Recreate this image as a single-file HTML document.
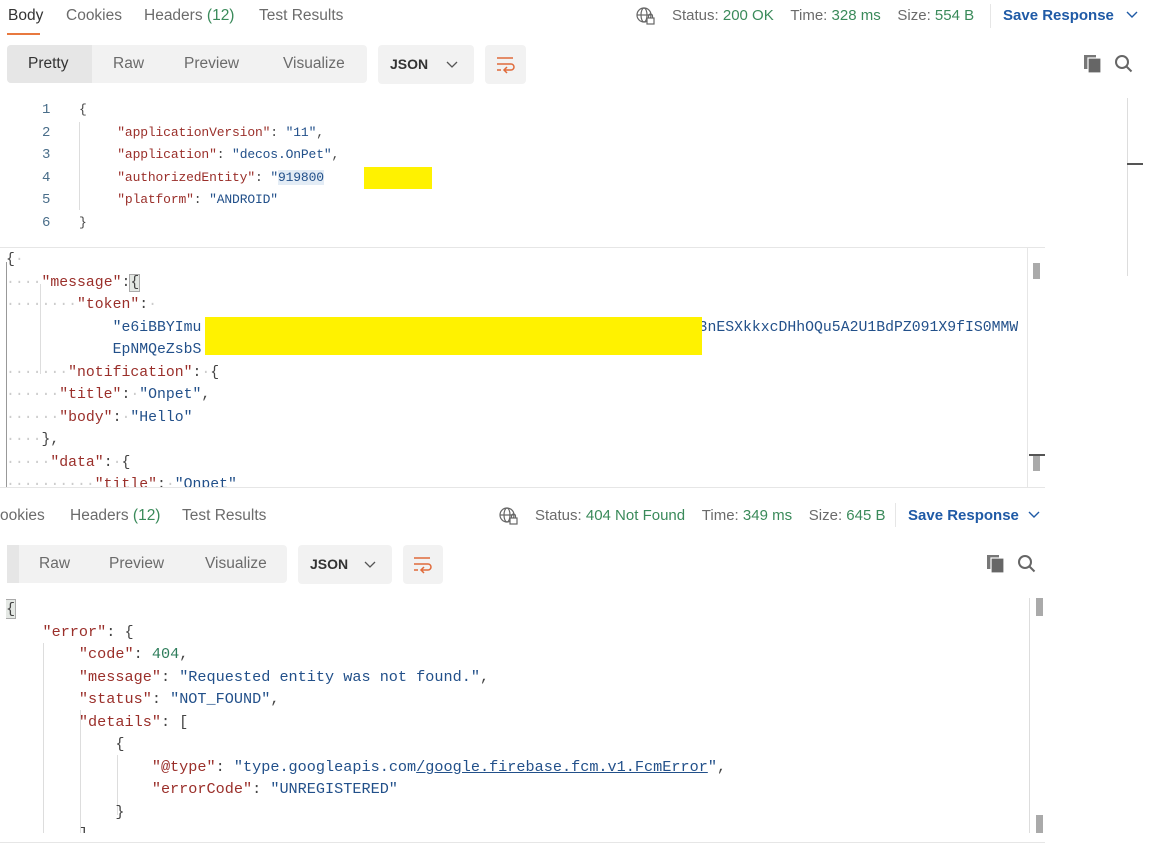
<!DOCTYPE html>
<html><head><meta charset="utf-8"><style>
body{margin:0;width:1156px;height:844px;background:#fff;position:relative;overflow:hidden;font-family:"Liberation Sans",sans-serif;}
.a{position:absolute;white-space:pre;}
.b{position:absolute;}
.b div{white-space:pre;}
.t{font-size:15.5px;color:#6b6b6b;}
.g{color:#3a8a5a;}
.sv{font-size:15px;color:#1f5aa6;font-weight:bold;}
.seg{position:absolute;background:#f2f2f2;border-radius:4px;}
.m{font-family:"Liberation Mono",monospace;font-size:14.8px;line-height:22.5px;}
.m3{font-family:"Liberation Mono",monospace;font-size:15.2px;line-height:22.5px;}
.m2{font-family:"Liberation Mono",monospace;font-size:13px;letter-spacing:-0.15px;line-height:22.5px;}
.k{color:#9a2f2a}.s{color:#22508a}.n{color:#2e7d5b}.p{color:#444}.d{color:#ccc}
.ln{color:#4a6e8a;font-size:14px;font-family:"Liberation Mono",monospace;line-height:22.5px;}
.st{font-size:15px;color:#6b6b6b;}
</style></head><body>
<!-- top tabs -->
<div class="a t" style="left:8px;top:7px;color:#333">Body</div>
<div style="position:absolute;left:7px;top:33px;width:33px;height:2px;background:#e8793f"></div>
<div class="a t" style="left:66px;top:7px">Cookies</div>
<div class="a t" style="left:144px;top:7px">Headers <span class="g">(12)</span></div>
<div class="a t" style="left:259px;top:7px">Test Results</div>
<svg class="a" style="left:636px;top:6px" width="20" height="20" viewBox="0 0 20 20" fill="none" stroke="#666" stroke-width="1.2"><circle cx="8" cy="9" r="7"/><ellipse cx="8" cy="9" rx="3" ry="7"/><path d="M1 9h14"/><rect x="11" y="12" width="7" height="6" fill="#fff"/><path d="M12.5 12v-2a2 2 0 0 1 4 0v2"/></svg>
<div class="a st" style="left:672px;top:7px">Status: <span class="g">200 OK</span>&nbsp;&nbsp;&nbsp;&nbsp;Time: <span class="g">328 ms</span>&nbsp;&nbsp;&nbsp;&nbsp;Size: <span class="g">554 B</span></div>
<div style="position:absolute;left:990px;top:4px;width:1px;height:24px;background:#e6e6e6"></div>
<div class="a sv" style="left:1003px;top:7px">Save Response</div>
<svg class="a" style="left:1126px;top:11px" width="12" height="8"><path d="M1 1l5 5 5-5" stroke="#1f5aa6" stroke-width="1.4" fill="none"/></svg>
<!-- segmented -->
<div class="seg" style="left:7px;top:45px;width:360px;height:38px"></div>
<div class="seg" style="left:7px;top:45px;width:85px;height:38px;background:#e6e6e6;border-radius:4px 0 0 4px"></div>
<div class="a t" style="left:28px;top:55px;color:#333">Pretty</div>
<div class="a t" style="left:113px;top:55px">Raw</div>
<div class="a t" style="left:184px;top:55px">Preview</div>
<div class="a t" style="left:283px;top:55px">Visualize</div>
<div class="seg" style="left:378px;top:45px;width:96px;height:39px"></div>
<div class="a" style="left:390px;top:56px;font-size:14px;font-weight:bold;color:#333">JSON</div>
<svg class="a" style="left:446px;top:61px" width="12" height="8"><path d="M1 1l5 5 5-5" stroke="#555" stroke-width="1.3" fill="none"/></svg>
<div class="seg" style="left:485px;top:45px;width:41px;height:39px"></div>
<svg class="a" style="left:495px;top:55px" width="22" height="20" fill="none" stroke="#e06a3a" stroke-width="1.5"><path d="M2 3h16M2 9h14a3 3 0 0 1 0 6h-6M2 15h4"/><path d="M12 12l-3 3 3 3"/></svg>
<svg class="a" style="left:1083px;top:54px" width="20" height="20"><rect x="1" y="1" width="12" height="14" fill="#777"/><rect x="5" y="4" width="13" height="15" fill="#666" stroke="#fff" stroke-width="1.2"/></svg>
<svg class="a" style="left:1113px;top:53px" width="22" height="22" fill="none" stroke="#666" stroke-width="2"><circle cx="9" cy="9" r="6"/><path d="M13.5 13.5l5 5"/></svg>
<!-- code 1 -->
<div class="b ln" style="left:42px;top:99px;"><div>1</div><div>2</div><div>3</div><div>4</div><div>5</div><div>6</div></div>
<div class="b m2" style="left:79px;top:99px;">
<div><span class="p">{</span></div>
<div>     <span class="k">"applicationVersion"</span><span class="p">: </span><span class="s">"11"</span><span class="p">,</span></div>
<div>     <span class="k">"application"</span><span class="p">: </span><span class="s">"decos.OnPet"</span><span class="p">,</span></div>
<div>     <span class="k">"authorizedEntity"</span><span class="p">: </span><span class="s">"<span style="background:#e3ecf5">919800</span></span>         <span class="p">,</span></div>
<div>     <span class="k">"platform"</span><span class="p">: </span><span class="s">"ANDROID"</span></div>
<div><span class="p">}</span></div>
</div>
<div style="position:absolute;left:79px;top:122px;width:1px;height:88px;background:#ddd"></div>
<div style="position:absolute;left:364px;top:167px;width:68px;height:22px;background:#fff200"></div>
<div style="position:absolute;left:1127px;top:98px;width:1px;height:178px;background:#ddd"></div>
<div style="position:absolute;left:1127px;top:163px;width:16px;height:2px;background:#555"></div>
<!-- middle -->
<div style="position:absolute;left:0;top:247px;width:1045px;height:1px;background:#e6e6e6"></div>
<div style="position:absolute;left:0;top:487px;width:1045px;height:1px;background:#e6e6e6"></div>
<div style="position:absolute;left:1027px;top:248px;width:1px;height:239px;background:#e6e6e6"></div>
<div style="position:absolute;left:1033px;top:263px;width:7px;height:16px;background:#aaa"></div>
<div style="position:absolute;left:1029px;top:454px;width:16px;height:2px;background:#555"></div>
<div style="position:absolute;left:1033px;top:456px;width:7px;height:15px;background:#aaa"></div>
<div style="position:absolute;left:6px;top:262px;width:1px;height:225px;background:#999"></div>
<div style="position:absolute;left:40px;top:284px;width:1px;height:90px;background:#ddd"></div>
<div class="b m" style="left:6px;top:249px;height:238px;overflow:hidden">
<div><span class="p">{</span><span class="d">·</span></div>
<div><span class="d">····</span><span class="k">"message"</span><span class="p">:</span><span class="p" style="background:#e4e8e4;outline:1px solid #aaa">{</span></div>
<div><span class="d">········</span><span class="k">"token"</span><span class="p">:</span><span class="d">·</span></div>
<div>            <span class="s">"e6iBBYImu                                                        3nESXkkxcDHhOQu5A2U1BdPZ091X9fIS0MMW</span></div>
<div>            <span class="s">EpNMQeZsbS</span></div>
<div><span class="d">·······</span><span class="k">"notification"</span><span class="p">:</span><span class="d">·</span><span class="p">{</span></div>
<div><span class="d">······</span><span class="k">"title"</span><span class="p">:</span><span class="d">·</span><span class="s">"Onpet"</span><span class="p">,</span></div>
<div><span class="d">······</span><span class="k">"body"</span><span class="p">:</span><span class="d">·</span><span class="s">"Hello"</span></div>
<div><span class="d">····</span><span class="p">},</span></div>
<div><span class="d">·····</span><span class="k">"data"</span><span class="p">:</span><span class="d">·</span><span class="p">{</span></div>
<div><span class="d">··········</span><span class="k">"title"</span><span class="p">:</span><span class="d">·</span><span class="s">"Onpet"</span></div>
</div>
<div style="position:absolute;left:205px;top:317px;width:497px;height:38px;background:#fff200"></div>
<!-- bottom tabs -->
<div class="a t" style="left:0;top:507px">ookies</div>
<div class="a t" style="left:70px;top:507px">Headers <span class="g">(12)</span></div>
<div class="a t" style="left:182px;top:507px">Test Results</div>
<svg class="a" style="left:499px;top:506px" width="20" height="20" viewBox="0 0 20 20" fill="none" stroke="#666" stroke-width="1.2"><circle cx="8" cy="9" r="7"/><ellipse cx="8" cy="9" rx="3" ry="7"/><path d="M1 9h14"/><rect x="11" y="12" width="7" height="6" fill="#fff"/><path d="M12.5 12v-2a2 2 0 0 1 4 0v2"/></svg>
<div class="a st" style="left:535px;top:507px">Status: <span class="g">404 Not Found</span>&nbsp;&nbsp;&nbsp;&nbsp;Time: <span class="g">349 ms</span>&nbsp;&nbsp;&nbsp;&nbsp;Size: <span class="g">645 B</span></div>
<div style="position:absolute;left:895px;top:503px;width:1px;height:24px;background:#e6e6e6"></div>
<div class="a sv" style="left:908px;top:507px">Save Response</div>
<svg class="a" style="left:1028px;top:511px" width="12" height="8"><path d="M1 1l5 5 5-5" stroke="#1f5aa6" stroke-width="1.4" fill="none"/></svg>
<div class="seg" style="left:7px;top:545px;width:280px;height:38px;border-radius:0 4px 4px 0"></div>
<div style="position:absolute;left:7px;top:545px;width:12px;height:38px;background:#e6e6e6"></div>
<div class="a t" style="left:39px;top:555px">Raw</div>
<div class="a t" style="left:109px;top:555px">Preview</div>
<div class="a t" style="left:205px;top:555px">Visualize</div>
<div class="seg" style="left:298px;top:545px;width:94px;height:39px"></div>
<div class="a" style="left:310px;top:556px;font-size:14px;font-weight:bold;color:#333">JSON</div>
<svg class="a" style="left:364px;top:561px" width="12" height="8"><path d="M1 1l5 5 5-5" stroke="#555" stroke-width="1.3" fill="none"/></svg>
<div class="seg" style="left:403px;top:545px;width:40px;height:39px"></div>
<svg class="a" style="left:412px;top:555px" width="22" height="20" fill="none" stroke="#e06a3a" stroke-width="1.5"><path d="M2 3h16M2 9h14a3 3 0 0 1 0 6h-6M2 15h4"/><path d="M12 12l-3 3 3 3"/></svg>
<svg class="a" style="left:986px;top:554px" width="20" height="20"><rect x="1" y="1" width="12" height="14" fill="#777"/><rect x="5" y="4" width="13" height="15" fill="#666" stroke="#fff" stroke-width="1.2"/></svg>
<svg class="a" style="left:1016px;top:553px" width="22" height="22" fill="none" stroke="#666" stroke-width="2"><circle cx="9" cy="9" r="6"/><path d="M13.5 13.5l5 5"/></svg>
<!-- bottom code -->
<div style="position:absolute;left:1029px;top:598px;width:1px;height:235px;background:#ddd"></div>
<div style="position:absolute;left:1036px;top:598px;width:7px;height:18px;background:#aaa"></div>
<div style="position:absolute;left:1036px;top:815px;width:7px;height:18px;background:#aaa"></div>
<div style="position:absolute;left:0;top:842px;width:1045px;height:1px;background:#e6e6e6"></div>
<div style="position:absolute;left:43px;top:643px;width:1px;height:190px;background:#ddd"></div>
<div style="position:absolute;left:80px;top:710px;width:1px;height:123px;background:#ddd"></div>
<div style="position:absolute;left:117px;top:755px;width:1px;height:60px;background:#ddd"></div>
<div class="b m3" style="left:6px;top:598px;height:235px;overflow:hidden">
<div><span class="p" style="background:#e4e8e4;outline:1px solid #aaa">{</span></div>
<div>    <span class="k">"error"</span><span class="p">: {</span></div>
<div>        <span class="k">"code"</span><span class="p">: </span><span class="n">404</span><span class="p">,</span></div>
<div>        <span class="k">"message"</span><span class="p">: </span><span class="s">"Requested entity was not found."</span><span class="p">,</span></div>
<div>        <span class="k">"status"</span><span class="p">: </span><span class="s">"NOT_FOUND"</span><span class="p">,</span></div>
<div>        <span class="k">"details"</span><span class="p">: [</span></div>
<div>            <span class="p">{</span></div>
<div>                <span class="k">"@type"</span><span class="p">: </span><span class="s">"type.googleapis.com<u>/google.firebase.fcm.v1.FcmError</u>"</span><span class="p">,</span></div>
<div>                <span class="k">"errorCode"</span><span class="p">: </span><span class="s">"UNREGISTERED"</span></div>
<div>            <span class="p">}</span></div>
<div>        <span class="p">]</span></div>
</div>
</body></html>
